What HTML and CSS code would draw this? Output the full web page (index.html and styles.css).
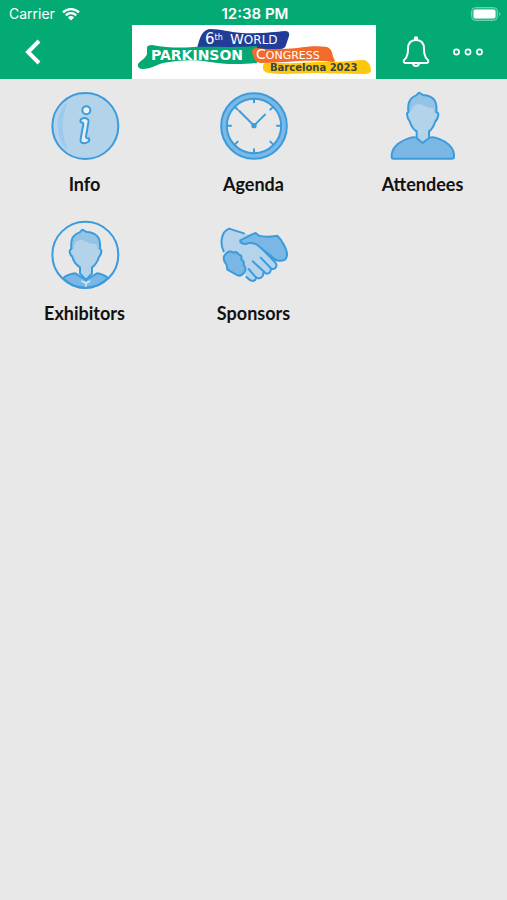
FILE: index.html
```html
<!DOCTYPE html>
<html lang="en">
<head>
    <meta charset="UTF-8">
    <meta name="viewport" content="width=device-width, initial-scale=1.0">
    <title>Parkinson Congress</title>
    <link rel="stylesheet" href="styles.css">
</head>
<body>
    <header class="header">
        <div class="status">
            <div class="carrier">
                <span>Carrier</span>
                <svg class="wifi" viewBox="0 0 18 14" aria-hidden="true">
                    <path d="M1 5.300a11.500 11.500 0 0 1 16 0M3.800 8.300a7.500 7.500 0 0 1 10.400 0" fill="none" stroke="#fff" stroke-width="2.300"/>
                    <path d="M9 13.500L5.900 10.400a4.500 4.500 0 0 1 6.200 0z" fill="#fff"/>
                </svg>
            </div>
            <div class="time">12:38 PM</div>
            <svg class="battery" viewBox="0 0 30 14" aria-hidden="true">
                <rect x="0.500" y="0.500" width="26" height="13" rx="4" fill="#28bd8b" stroke="#6bd2ae"/>
                <rect x="2.500" y="2.500" width="22" height="9" rx="2" fill="#fff"/>
                <path d="M28 5q3 2 0 4z" fill="#6bd2ae"/>
            </svg>
        </div>
        <nav class="nav">
            <button class="back" type="button" aria-label="Back">
                <svg viewBox="0 0 16 26" aria-hidden="true"><path d="M14 2L3 13l11 11" fill="none" stroke="#fff" stroke-width="4"/></svg>
            </button>
            <div class="logo">
                <svg viewBox="0 0 244 54" role="img" aria-label="6th World Parkinson Congress Barcelona 2023">
                    <path d="M64 27C67 18 68 5 78 4C90 4 96 7 110 8C125 9 142 7 153 6Q158 6 157 11L154 20Q153 24 148 24L120 28z" fill="#213d98"/>
                    <path d="M15 22Q16 20 20 20C36 23 48 23 62 22C80 21 100 23 125 21V38C105 40 90 39 78 37C65 34 45 35 31 38C22 41 17 44 11 44Q5 44 6 39C8 36 14 33 15 29z" fill="#04a873"/>
                    <path d="M131 44Q130 37 136 37C155 39 165 38 185 37C205 37 219 36 231 35C237 35 239 42 239 46Q238 49 232 49C218 49 202 48 185 48C167 48 151 50 137 48Q132 47 131 44z" fill="#fdc70c"/>
                    <path d="M120 27Q120 23 125 23C140 25 152 24 165 23C178 21 187 21 195 22C201 24 200 31 203 36Q203 37 200 37C185 35 168 36 154 37L129 38Q122 38 120 27z" fill="#f36b2b"/>
                    <g class="logo-text">
                        <text x="73" y="19" font-size="15">6<tspan font-size="8" dy="-4">th</tspan></text>
                        <text x="98" y="19" font-size="14">W<tspan font-size="12">ORLD</tspan></text>
                        <text x="19" y="35" font-size="14" font-weight="bold">PARKINSON</text>
                        <text x="124" y="34" font-size="14">C<tspan font-size="11">ONGRESS</tspan></text>
                        <text x="138" y="46" font-size="10" font-weight="bold" class="logo-city">Barcelona 2023</text>
                    </g>
                </svg>
            </div>
            <div class="actions">
                <button type="button" aria-label="Notifications">
                    <svg class="bell" viewBox="0 0 28 32" fill="none" stroke="#fff" stroke-width="2" aria-hidden="true">
                        <path d="M14 4C8 4 6 8 6 13C6 19 5 22 2 24Q1 27 4 27H24Q27 27 26 24C23 22 22 19 22 13C22 8 20 4 14 4z"/>
                        <path d="M11 27a3 3 0 0 0 6 0"/>
                        <circle cx="14" cy="2.500" r="1.200"/>
                    </svg>
                </button>
                <button type="button" aria-label="More">
                    <svg class="more" viewBox="0 0 32 8" fill="none" stroke="#fff" stroke-width="1.600" aria-hidden="true">
                        <circle cx="4.500" cy="4" r="2.600"/><circle cx="16" cy="4" r="2.600"/><circle cx="27.500" cy="4" r="2.600"/>
                    </svg>
                </button>
            </div>
        </nav>
    </header>

    <main class="tiles">
        <a class="tile" href="#info">
            <svg viewBox="48 36 204 204" aria-hidden="true">
                <circle cx="151" cy="138" r="99" class="light line"/>
                <path d="M99 66C58 91 58 183 99 209C78 166 78 108 99 66z" fill="#9dcaec"/>
                <circle cx="154" cy="91" r="12" fill="#edf2f6" class="line"/>
                <path d="M139 117Q149 111 159 118Q162 121 160 128L153 170Q153 176 162 175Q165 181 159 186Q148 193 139 187Q135 184 137 176L145 133Q145 128 138 127Q134 122 139 117z" fill="#e5eef6" class="line"/>
            </svg>
            <span>Info</span>
        </a>
        <a class="tile" href="#agenda">
            <svg viewBox="48 36 204 204" aria-hidden="true">
                <circle cx="150" cy="138" r="90" fill="none" stroke="#3c9cdb" stroke-width="23"/>
                <circle cx="150" cy="138" r="90" fill="none" stroke="#79b9e7" stroke-width="11"/>
                <path d="M150 56v11M150 208v11M70 137h11M219 137h11M93 81l8 8M207 81l-8 8M93 193l8-8M207 193l-8-8M106 93L150 137L183 104" class="line"/>
                <circle cx="150" cy="137" r="8" fill="#3c9cdb"/>
            </svg>
            <span>Agenda</span>
        </a>
        <a class="tile" href="#attendees">
            <svg viewBox="48 36 204 204" aria-hidden="true">
                <path d="M131 155L130 172L149 188L169 173L168 155z" class="light"/>
                <path d="M131 155C116 145 112 131 110 124Q104 118 102 104Q102 97 106 97C104 73 107 54 130 46L138 38L150 45C180 47 194 61 190 97Q197 97 196 106Q193 120 187 124C183 138 179 146 168 155z" class="light"/>
                <path d="M106 97C104 73 107 54 130 46L138 38L150 45C180 47 194 61 190 97H184L180 83Q164 86 151 76Q135 69 123 77Q115 83 112 97z" class="mid"/>
                <path d="M131 155C116 145 112 131 110 124Q104 118 102 104Q102 97 106 97C104 73 107 54 130 46L138 38L150 45C180 47 194 61 190 97Q197 97 196 106Q193 120 187 124C183 138 179 146 168 155M131 153V172M168 153V172" class="line"/>
                <path d="M113 173Q121 170 130 173L149 189L169 173Q178 170 187 173C218 183 246 202 243 233Q242 236 237 236H61Q56 236 56 231C55 201 81 183 113 173z" class="dark line"/>
            </svg>
            <span>Attendees</span>
        </a>
        <a class="tile" href="#exhibitors">
            <svg viewBox="48 33 204 204" aria-hidden="true">
                <path d="M84 204Q103 191 121 190L153 210L186 190Q202 191 219 204Q189 234 151 234Q111 234 84 204z" class="dark line"/>
                <path d="M135 170V195L153 211L170 195V170z" class="light"/>
                <path d="M135 172C123 164 115 153 112 140Q105 135 104 124Q104 119 109 117C107 89 111 76 134 67L142 59L153 65C184 67 198 82 195 117Q200 118 199 125Q198 135 192 140C188 155 183 163 171 172z" class="light"/>
                <path d="M109 117C107 89 111 76 134 67L142 59L153 65C184 67 198 82 195 117H187L184 101Q166 104 151 94Q136 86 125 94Q117 101 116 117z" class="mid"/>
                <path d="M135 172C123 164 115 153 112 140Q105 135 104 124Q104 119 109 117C107 89 111 76 134 67L142 59L153 65C184 67 198 82 195 117Q200 118 199 125Q198 135 192 140C188 155 183 163 171 172M135 172V190L153 210L171 190V172" class="line"/>
                <path d="M139 213L153 219L166 213M153 219V231" fill="none" stroke="#d5e5f1" stroke-width="5"/>
                <circle cx="151" cy="134" r="99" class="line"/>
            </svg>
            <span>Exhibitors</span>
        </a>
        <a class="tile" href="#sponsors">
            <svg viewBox="48 33 204 204" aria-hidden="true">
                <path d="M59 124C48 103 50 66 75 56L120 70L158 81L215 159Q222 166 215 174Q209 180 201 176Q202 191 187 191L178 187Q181 202 166 206Q159 206 155 201Q157 211 147 213Q137 213 127 200L111 150L82 124z" fill="#b5d4eb"/>
                <path d="M59 124C48 103 50 66 75 56L120 70M170 112L214 158Q221 166 214 174Q207 180 200 174L170 143M200 175Q202 191 187 191L146 154M178 184Q180 202 166 205Q160 206 153 199L134 177M155 200Q158 211 146 213Q137 212 127 201" class="line"/>
                <path d="M109 91L144 73L155 69L165 77C183 83 199 81 220 77C235 91 250 120 249 136Q247 152 231 152C221 154 211 150 201 138L159 104Q139 95 126 102Q115 103 109 96z" class="dark line"/>
                <path d="M66 130Q76 120 87 128Q99 123 105 134Q115 134 112 149Q122 153 119 165Q128 174 122 185Q113 200 101 196L70 179L68 165Q56 150 60 139z" class="dark line"/>
            </svg>
            <span>Sponsors</span>
        </a>
    </main>
</body>
</html>
```
FILE: styles.css
```css
* {
    box-sizing: border-box;
}
body {
    margin: 0;
    min-height: 100vh;
    background-color: #e8e8e8;
    color: #111;
    font-family: Lato, sans-serif;
}
.header {
    background-color: #04aa74;
    color: #fff;
}
.status {
    display: grid;
    grid-template-columns: 1fr auto 1fr;
    align-items: center;
    height: 25px;
    padding: 2px 6px 0 9px;
    font-family: Inter, sans-serif;
    font-size: 14px;
}
.carrier {
    display: flex;
    align-items: center;
    gap: 7px;
}
.wifi {
    width: 18px;
    height: 14px;
}
.time {
    font-size: 15px;
    font-weight: 600;
}
.battery {
    width: 30px;
    height: 14px;
    justify-self: end;
}
.nav {
    display: grid;
    grid-template-columns: 1fr 244px 1fr;
    height: 54px;
}
.nav button {
    display: flex;
    align-items: center;
    padding: 0;
    border: none;
    background: none;
    cursor: pointer;
}
.nav .back {
    padding-left: 25px;
}
.back svg {
    width: 16px;
    height: 26px;
}
.logo {
    background-color: #fff;
}
.logo svg {
    display: block;
    width: 100%;
}
.logo-text {
    fill: #fff;
    font-family: "DejaVu Sans", sans-serif;
}
.logo-city {
    fill: #374346;
}
.actions {
    display: flex;
    justify-content: flex-end;
    gap: 22px;
    padding-right: 23px;
}
.bell {
    width: 28px;
    height: 32px;
}
.more {
    width: 32px;
    height: 8px;
}
.tiles {
    display: grid;
    grid-template-columns: repeat(3, 1fr);
    row-gap: 25px;
    padding-top: 13px;
}
.tile {
    display: flex;
    flex-direction: column;
    align-items: center;
    gap: 12px;
    color: inherit;
    font-size: 18px;
    font-weight: bold;
    line-height: 25px;
    text-decoration: none;
}
.tile:nth-child(n + 4) {
    margin-top: -1px;
}
.tile svg {
    width: 68px;
    height: 68px;
    overflow: visible;
}
.line {
    stroke: #3c9cdb;
    stroke-width: 6;
    stroke-linecap: round;
    stroke-linejoin: round;
}
.line:not([fill]):not(.light):not(.dark) {
    fill: none;
}
.light {
    fill: #b3d3eb;
}
.mid {
    fill: #94c3e6;
}
.dark {
    fill: #7bb7e4;
}
```
